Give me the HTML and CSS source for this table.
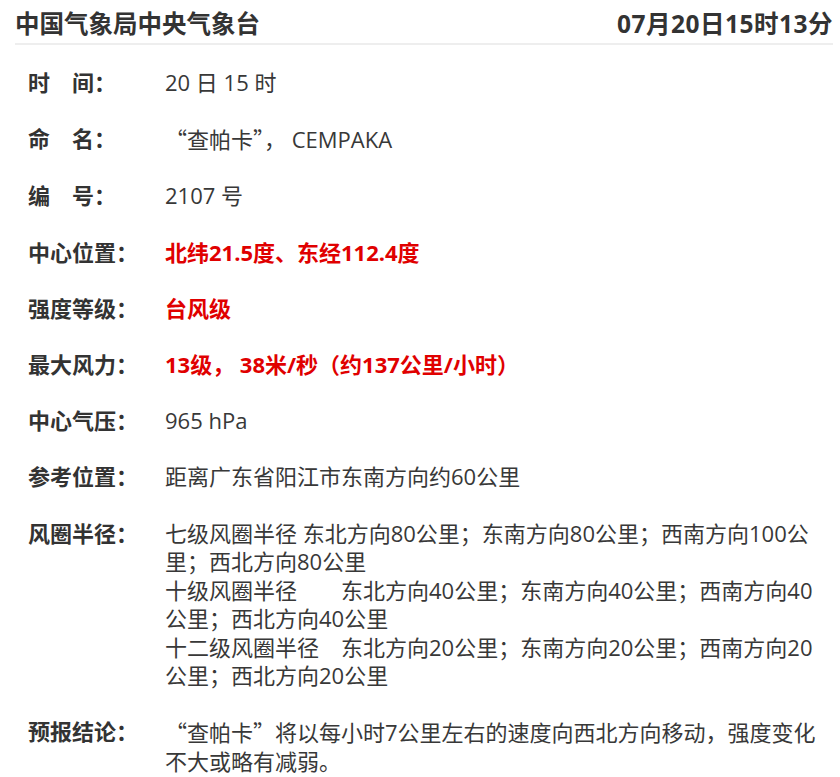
FILE: index.html
```html
<!DOCTYPE html>
<html lang="zh-CN">
<head>
  <meta charset="UTF-8" />
  <meta name="viewport" content="width=device-width, initial-scale=1.0" />
  <title>台风快讯 – 中央气象台</title>
  <link rel="stylesheet" href="styles.css">
</head>
<body>
  <div class="page">
    <div class="header">
      <span class="title">中国气象局中央气象台</span>
      <span class="stamp">07月20日15时13分</span>
    </div>

    <div class="info">
      <div class="row">
        <div class="label">时　间：</div>
        <div class="value">20 日 15 时</div>
      </div>
      <div class="row">
        <div class="label">命　名：</div>
        <div class="value"><span class="cjk">“查帕卡”，</span> CEMPAKA</div>
      </div>
      <div class="row">
        <div class="label">编　号：</div>
        <div class="value">2107 号</div>
      </div>
      <div class="row">
        <div class="label">中心位置：</div>
        <div class="value hot">北纬21.5度、东经112.4度</div>
      </div>
      <div class="row">
        <div class="label">强度等级：</div>
        <div class="value hot">台风级</div>
      </div>
      <div class="row">
        <div class="label">最大风力：</div>
        <div class="value hot">13级， 38米/秒（约137公里/小时）</div>
      </div>
      <div class="row">
        <div class="label">中心气压：</div>
        <div class="value">965 hPa</div>
      </div>
      <div class="row">
        <div class="label">参考位置：</div>
        <div class="value">距离广东省阳江市东南方向约60公里</div>
      </div>
      <div class="row">
        <div class="label">风圈半径：</div>
        <div class="value">
          七级风圈半径 东北方向80公里；东南方向80公里；西南方向100公里；西北方向80公里<br>
          十级风圈半径　　东北方向40公里；东南方向40公里；西南方向40公里；西北方向40公里<br>
          十二级风圈半径　东北方向20公里；东南方向20公里；西南方向20公里；西北方向20公里
        </div>
      </div>
      <div class="row">
        <div class="label">预报结论：</div>
        <div class="value"><span class="cjk">“查帕卡”</span>将以每小时7公里左右的速度向西北方向移动，强度变化不大或略有减弱。</div>
      </div>
    </div>
  </div>
</body>
</html>
```

FILE: styles.css
```css
body {
  font-family: 'Open Sans', 'Noto Sans CJK SC', sans-serif;
  background: #fff;
  color: #333;
  margin: 0;
}
.page {
  padding: 0 7px 0 15px;
}
.header {
  display: flex;
  justify-content: space-between;
  align-items: center;
  padding: 7px 0 2px;
  line-height: 34px;
  font-size: 24.5px;
  font-weight: bold;
  border-bottom: 2px solid #eeeeee;
}
.stamp {
  letter-spacing: 0.5px;
}
.info {
  padding: 23px 8px 0 13px;
  font-size: 22px;
  line-height: 28.5px;
}
.row {
  display: flex;
  margin-bottom: 27.7px;
}
.label {
  width: 137px;
  flex-shrink: 0;
  font-weight: bold;
}
.value {
  flex: 1;
  color: #383838;
}
.value.hot {
  color: #e00000;
  font-weight: bold;
}
.cjk {
  font-family: 'Noto Sans CJK SC', sans-serif;
}
```
